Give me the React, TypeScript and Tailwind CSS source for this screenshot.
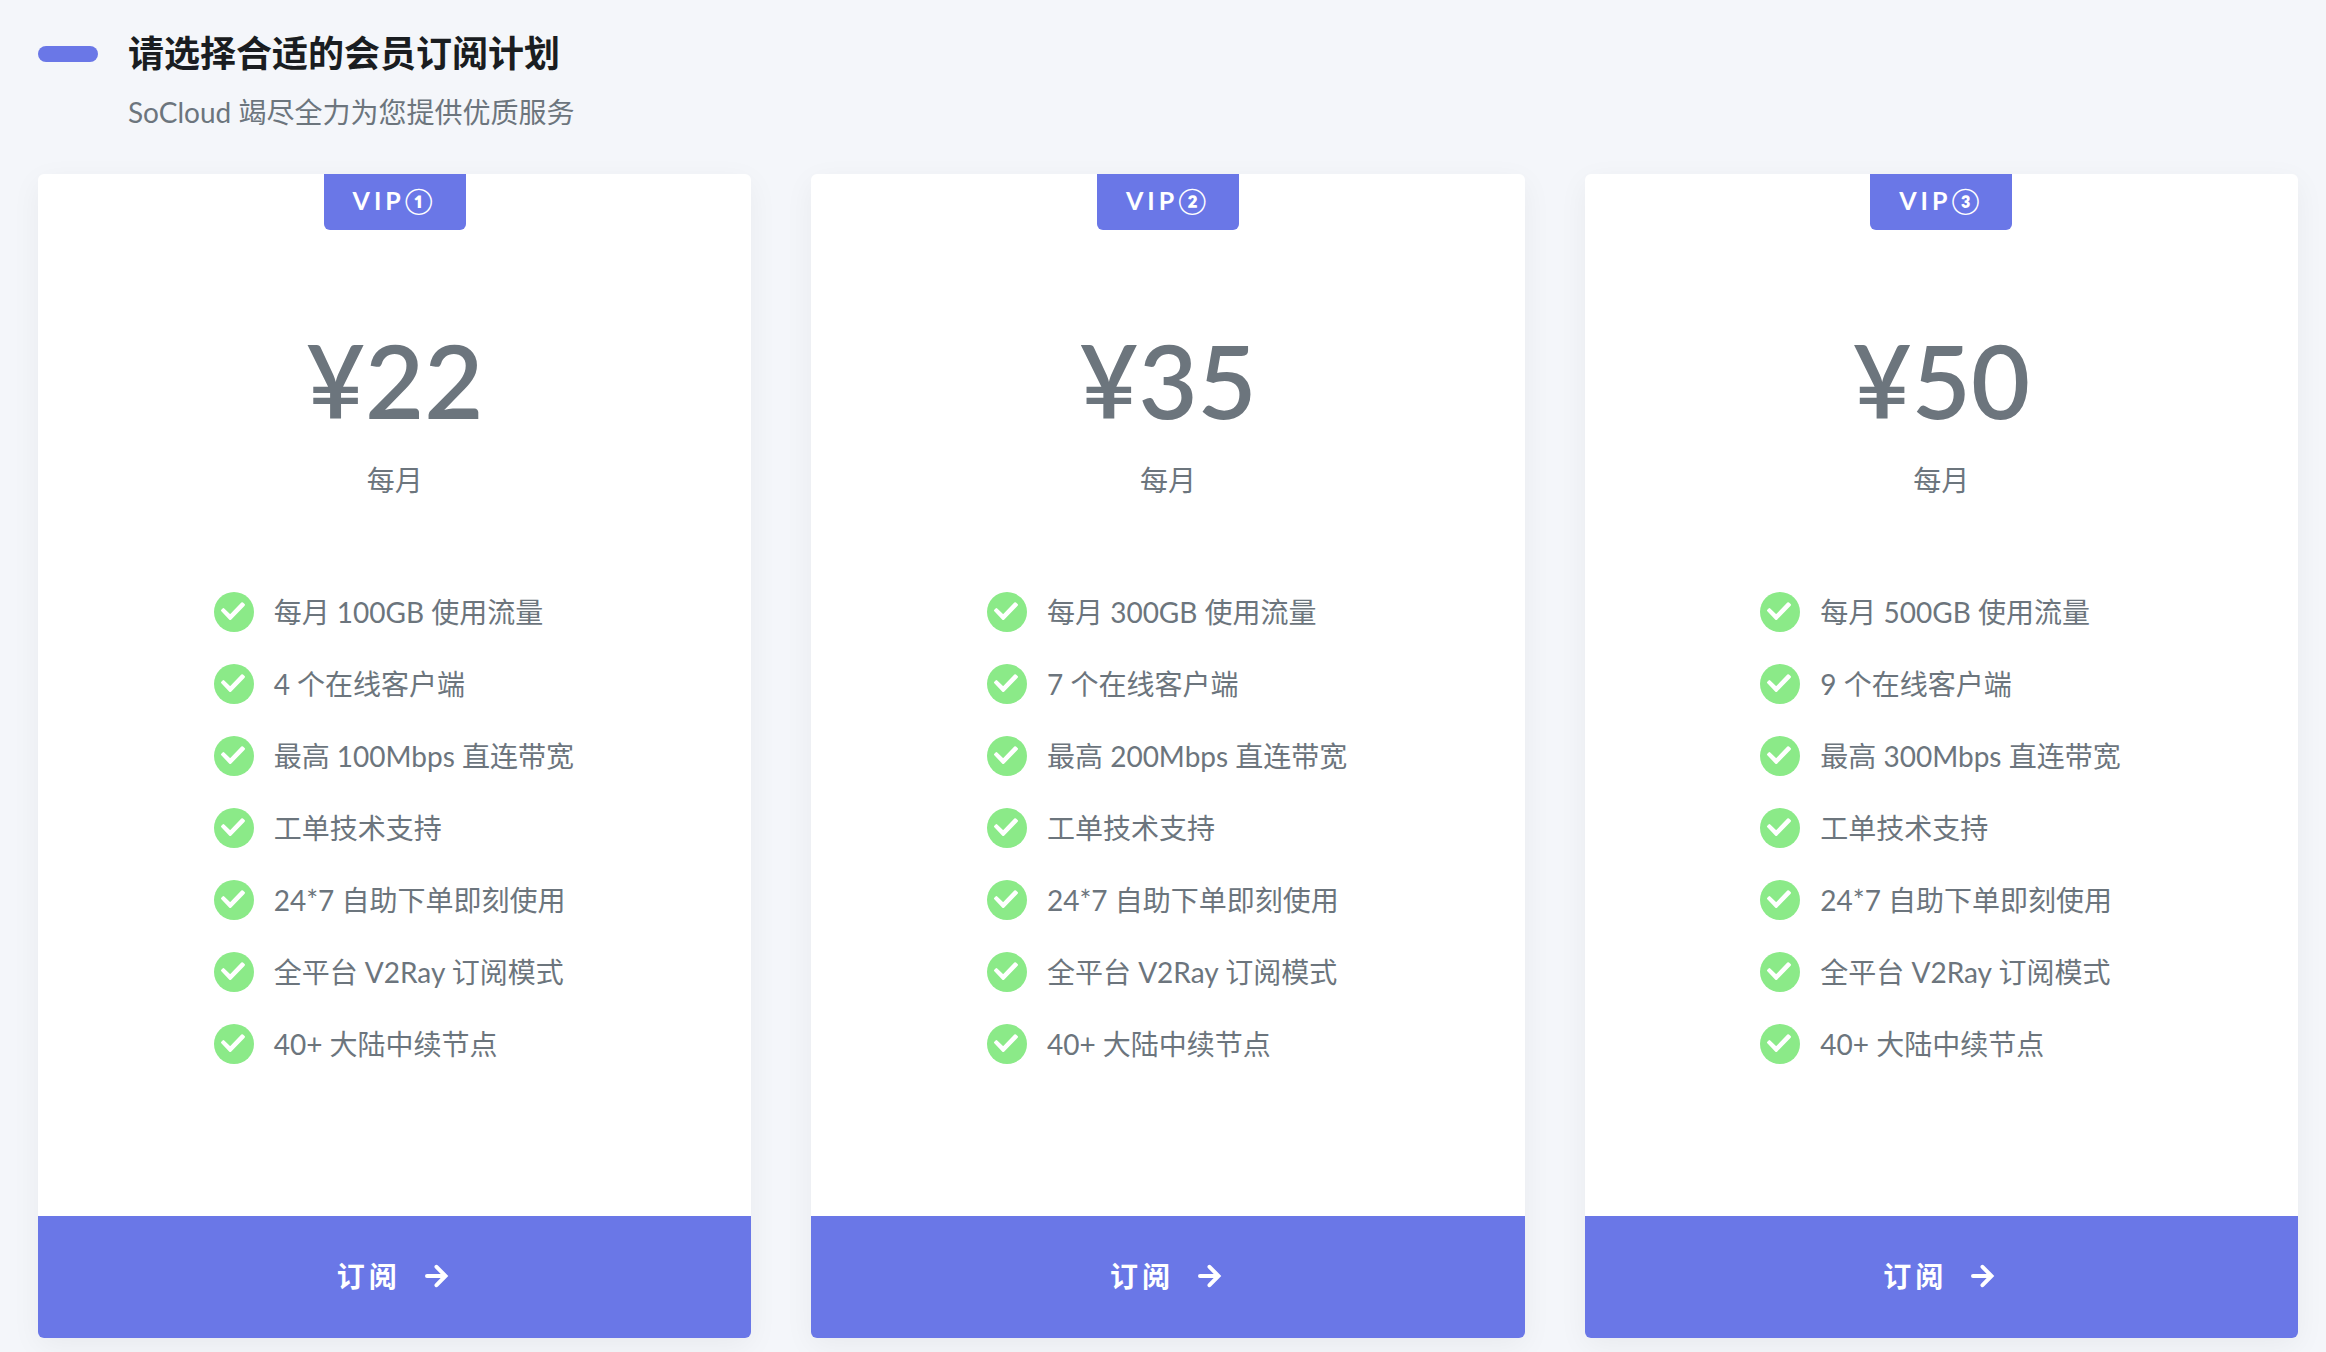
import React from "react";

type Plan = { name: string; price: string; features: string[] };

const makeFeatures = (traffic: number, clients: number, speed: number): string[] => [
  `每月 ${traffic}GB 使用流量`,
  `${clients} 个在线客户端`,
  `最高 ${speed}Mbps 直连带宽`,
  "工单技术支持",
  "24*7 自助下单即刻使用",
  "全平台 V2Ray 订阅模式",
  "40+ 大陆中续节点",
];

const plans: Plan[] = [
  { name: "VIP①", price: "¥22", features: makeFeatures(100, 4, 100) },
  { name: "VIP②", price: "¥35", features: makeFeatures(300, 7, 200) },
  { name: "VIP③", price: "¥50", features: makeFeatures(500, 9, 300) },
];

function CheckIcon() {
  return (
    <svg className="size-10 shrink-0" viewBox="0 0 40 40" aria-hidden="true">
      <circle cx="20" cy="20" r="20" fill="#8bea88" />
      <path
        d="m8.2 18.5 1.2-1.2 6.8 6.6L28.2 11.4l1.6 1.4-13.6 14Z"
        fill="#fff"
        stroke="#fff"
        strokeWidth="2.4"
        strokeLinejoin="round"
      />
    </svg>
  );
}

function ArrowIcon() {
  return (
    <svg
      className="size-6"
      viewBox="0 0 24 24"
      fill="none"
      stroke="currentColor"
      strokeWidth="4"
      strokeLinecap="round"
      aria-hidden="true"
    >
      <path d="M2 12h18M11.5 2.8 20.5 12l-9 9.2" />
    </svg>
  );
}

function PlanCard({ plan }: { plan: Plan }) {
  return (
    <article className="flex flex-col items-center rounded-md bg-white shadow-[0_8px_30px_rgba(0,0,0,0.05)]">
      <h2 className="flex h-14 items-center rounded-b-md bg-[#6a77e7] px-[29px] pb-0.5 text-[25px] font-bold tracking-[4px] text-white">
        {plan.name}
      </h2>
      <p className="mt-[90px] text-[102px] leading-[120px] font-semibold">{plan.price}</p>
      <p className="mt-5 leading-10">每月</p>
      <ul className="mt-[92px] flex w-[362px] flex-col gap-8 whitespace-nowrap">
        {plan.features.map((feature) => (
          <li key={feature} className="flex items-center gap-5 leading-10">
            <CheckIcon />
            {feature}
          </li>
        ))}
      </ul>
      <button className="mt-[152px] flex h-[122px] w-full items-center justify-center gap-6 rounded-b-md bg-[#6a77e7] pr-1 pb-0.5 font-bold tracking-[4px] text-white">
        订阅
        <ArrowIcon />
      </button>
    </article>
  );
}

export default function App() {
  return (
    <main
      lang="zh-CN"
      className="min-h-screen bg-[#f4f6fa] pt-7 pr-7 pb-3.5 pl-[38px] font-['Lato','Noto_Sans_CJK_SC',sans-serif] text-[28px] text-[#6c757d]"
    >
      <header className="grid grid-cols-[60px_1fr] items-center gap-x-[30px] gap-y-3">
        <span className="h-4 rounded-full bg-[#6a77e7]" />
        <h1 className="pb-0.5 text-4xl leading-[50px] font-bold text-[#1a1d21]">请选择合适的会员订阅计划</h1>
        <p className="col-start-2 leading-10">SoCloud 竭尽全力为您提供优质服务</p>
      </header>
      <section className="mt-[42px] grid grid-cols-3 gap-[60px]">
        {plans.map((plan) => (
          <PlanCard key={plan.name} plan={plan} />
        ))}
      </section>
    </main>
  );
}
